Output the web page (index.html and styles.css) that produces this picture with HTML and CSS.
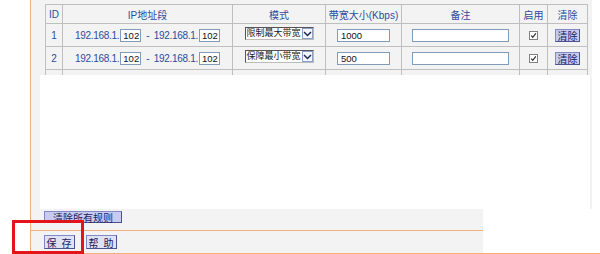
FILE: index.html
```html
<!DOCTYPE html>
<html>
<head>
<meta charset="utf-8">
<link rel="stylesheet" href="styles.css">
</head>
<body>
<div class="panel">
  <div class="top">
    <table class="rules">
      <colgroup>
        <col class="c-id"><col class="c-ip"><col class="c-mode"><col class="c-bw"><col class="c-note"><col class="c-en"><col class="c-del">
      </colgroup>
      <tr class="head">
        <th>ID</th><th>IP地址段</th><th>模式</th><th>带宽大小(Kbps)</th><th>备注</th><th>启用</th><th>清除</th>
      </tr>
      <tr>
        <td>1</td>
        <td><span class="ip">192.168.1.</span><span class="inp oct">102</span><span class="dash">-</span><span class="ip">192.168.1.</span><span class="inp oct">102</span></td>
        <td><span class="sel"><span class="sel-txt">限制最大带宽</span><span class="arrow"><svg width="9" height="6" viewBox="0 0 9 6"><path d="M1 1 L4.5 4.5 L8 1" fill="none" stroke="#1a2a5a" stroke-width="1.5"/></svg></span></span></td>
        <td><span class="inp bw">1000</span></td>
        <td><span class="inp note"></span></td>
        <td><span class="chk"><svg width="9" height="9" viewBox="0 0 9 9"><path d="M1.5 4.5 L3.5 6.8 L7.5 1.8" fill="none" stroke="#222" stroke-width="1.4"/></svg></span></td>
        <td><span class="btn del">清除</span></td>
      </tr>
      <tr>
        <td>2</td>
        <td><span class="ip">192.168.1.</span><span class="inp oct">102</span><span class="dash">-</span><span class="ip">192.168.1.</span><span class="inp oct">102</span></td>
        <td><span class="sel"><span class="sel-txt">保障最小带宽</span><span class="arrow"><svg width="9" height="6" viewBox="0 0 9 6"><path d="M1 1 L4.5 4.5 L8 1" fill="none" stroke="#1a2a5a" stroke-width="1.5"/></svg></span></span></td>
        <td><span class="inp bw">500</span></td>
        <td><span class="inp note"></span></td>
        <td><span class="chk"><svg width="9" height="9" viewBox="0 0 9 9"><path d="M1.5 4.5 L3.5 6.8 L7.5 1.8" fill="none" stroke="#222" stroke-width="1.4"/></svg></span></td>
        <td><span class="btn del">清除</span></td>
      </tr>
      <tr>
        <td></td>
        <td></td>
        <td><span class="sel sel-cut"></span></td>
        <td></td><td></td><td></td><td></td>
      </tr>
    </table>
  </div>
  <div class="mid"><div class="blank"></div></div>
  <div class="bar bar1"><span class="btn wide">清除所有规则</span></div>
  <div class="bar bar2"><span class="btn small">保 存</span><span class="btn small">帮 助</span></div>
</div>
<div class="hr"></div>
<div class="mark"></div>
</body>
</html>
```
FILE: styles.css
```css
html, body {
  margin: 0;
  padding: 0;
}
body {
  width: 600px;
  height: 254px;
  overflow: hidden;
  background: #ffffff;
  font-family: "Liberation Sans", "Noto Sans CJK SC", sans-serif;
  font-size: 10px;
  position: relative;
}
.panel {
  margin-left: 30px;
  width: 561px;
  border-left: 1px solid #f2b07a;
}
.top {
  background: #f3f3f3;
  height: 75px;
  overflow: hidden;
  padding: 4px 0 0 14px;
  box-sizing: border-box;
}
.rules {
  border-collapse: collapse;
  table-layout: fixed;
  width: 542px;
}
.c-id { width: 17px; }
.c-ip { width: 170px; }
.c-mode { width: 93px; }
.c-bw { width: 76px; }
.c-note { width: 118px; }
.c-en { width: 28px; }
.c-del { width: 40px; }
.rules th, .rules td {
  border: 1px solid #bfbfbf;
  padding: 0;
  text-align: center;
  vertical-align: middle;
  color: #2b4c9e;
  font-weight: normal;
  white-space: nowrap;
  overflow: hidden;
}
.rules th {
  height: 18px;
  font-size: 10px;
}
.rules td {
  height: 22px;
}
.ip {
  letter-spacing: -0.3px;
  vertical-align: middle;
}
.dash {
  margin: 0 4px 0 5px;
  vertical-align: middle;
}
.inp {
  display: inline-block;
  box-sizing: border-box;
  background: #fff;
  border: 1px solid #7f9db9;
  height: 13px;
  line-height: 11px;
  font-size: 9.5px;
  color: #111;
  text-align: left;
  padding-left: 2px;
  vertical-align: middle;
}
.oct { width: 21px; margin-left: 1px; }
.bw { width: 53px; padding-left: 3px; }
.note { width: 97px; }
.sel {
  display: inline-flex;
  box-sizing: border-box;
  width: 69px;
  height: 13px;
  border: 1px solid #555;
  border-right-color: #bbb;
  border-bottom-color: #bbb;
  background: #fff;
  vertical-align: middle;
  align-items: center;
  margin-top: -4px;
}
.sel-cut {
  margin-top: 0;
}
.sel-txt {
  flex: 1;
  font-size: 9px;
  line-height: 11px;
  color: #222;
  text-align: left;
  padding-left: 1px;
  overflow: hidden;
}
.arrow {
  display: flex;
  align-items: center;
  justify-content: center;
  width: 11px;
  height: 11px;
  box-sizing: border-box;
  border: 1px solid #8aa0c8;
  background: #f4f6fb;
}
.chk {
  display: inline-flex;
  align-items: center;
  justify-content: center;
  box-sizing: border-box;
  width: 9px;
  height: 9px;
  border: 1px solid #808080;
  background: #fff;
  vertical-align: middle;
}
.btn {
  display: inline-flex;
  align-items: center;
  justify-content: center;
  box-sizing: border-box;
  background: #c8cbef;
  border: 1px solid #8088c8;
  border-right-color: #4a5290;
  border-bottom-color: #4a5290;
  color: #1c2060;
  font-size: 10px;
}
.del {
  width: 25px;
  height: 13px;
  vertical-align: middle;
}
.mid {
  background: #f3f3f3;
  height: 134px;
  padding-left: 9px;
}
.blank {
  background: #ffffff;
  width: 550px;
  height: 100%;
}
.bar {
  width: 452px;
  background: #f3f3f3;
  display: flex;
  align-items: center;
  padding-left: 13px;
  box-sizing: border-box;
  gap: 11px;
}
.bar1 {
  height: 22px;
  border-bottom: 1px solid #f2b07a;
  align-items: flex-start;
  padding-top: 2px;
}
.bar2 {
  height: 22px;
}
.wide {
  width: 78px;
  height: 12px;
  background: #c8cbef;
}
.small {
  width: 31px;
  height: 14px;
  background: #dfe2f2;
  letter-spacing: 1px;
}
.hr {
  margin-left: 30px;
  height: 1px;
  background: #f2b07a;
}
.mark {
  position: absolute;
  left: 12px;
  top: 220px;
  width: 72px;
  height: 34px;
  box-sizing: border-box;
  border: 3px solid #e3141c;
}
```
